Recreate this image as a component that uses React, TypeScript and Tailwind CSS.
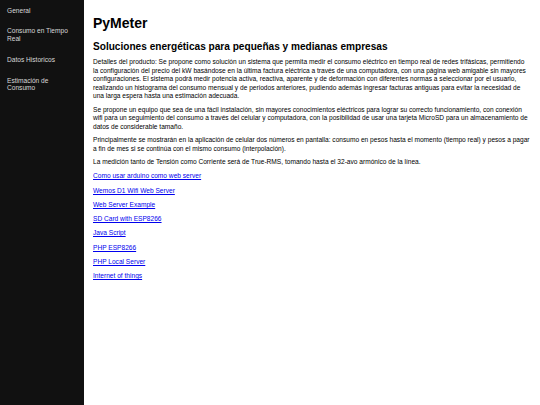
import React from "react";

const navItems = ["General", "Consumo en Tiempo Real", "Datos Historicos", "Estimación de Consumo"];

const links = [
  "Como usar arduino como web server",
  "Wemos D1 Wifi Web Server",
  "Web Server Example",
  "SD Card with ESP8266",
  "Java Script",
  "PHP ESP8266",
  "PHP Local Server",
  "Internet of things",
];

export default function App() {
  return (
    <div
      className="flex min-h-[405px] w-[540px] bg-white text-black"
      style={{ fontFamily: '"Liberation Sans", Arial, sans-serif' }}
    >
      <nav className="flex w-[84px] shrink-0 flex-col bg-[#111111]">
        {navItems.map((item) => (
          <a key={item} className="block px-[7px] py-[6.5px] text-[6.6px] leading-[7.8px] text-[#d8d8d8]">
            {item}
          </a>
        ))}
      </nav>

      <main className="flex-1 pl-[9px] pr-[10px] pt-[15px]">
        <h1 className="text-[14px] font-bold leading-[16px]">PyMeter</h1>
        <h2 className="mt-[10px] text-[10.1px] font-bold leading-[12px]">
          Soluciones energéticas para pequeñas y medianas empresas
        </h2>

        <div className="mt-[5px] flex flex-col gap-[5px] text-[6.6px] leading-[8.5px]">
          <p>
            Detalles del producto: Se propone como solución un sistema que permita medir el consumo eléctrico en
            tiempo real de redes trifásicas, permitiendo la configuración del precio del kW basándose en la última
            factura eléctrica a través de una computadora, con una página web amigable sin mayores configuraciones.
            El sistema podrá medir potencia activa, reactiva, aparente y de deformación con diferentes normas a
            seleccionar por el usuario, realizando un histograma del consumo mensual y de periodos anteriores,
            pudiendo además ingresar facturas antiguas para evitar la necesidad de una larga espera hasta una
            estimación adecuada.
          </p>
          <p>
            Se propone un equipo que sea de una fácil instalación, sin mayores conocimientos eléctricos para lograr
            su correcto funcionamiento, con conexión wifi para un seguimiento del consumo a través del celular y
            computadora, con la posibilidad de usar una tarjeta MicroSD para un almacenamiento de datos de
            considerable tamaño.
          </p>
          <p>
            Principalmente se mostrarán en la aplicación de celular dos números en pantalla: consumo en pesos hasta
            el momento (tiempo real) y pesos a pagar a fin de mes si se continúa con el mismo consumo (interpolación).
          </p>
          <p>
            La medición tanto de Tensión como Corriente será de True-RMS, tomando hasta el 32-avo armónico de la
            línea.
          </p>
          {links.map((l) => (
            <p key={l} className="mt-[0.8px]">
              <a href="#" className="text-[#0000ee] underline">
                {l}
              </a>
            </p>
          ))}
        </div>
      </main>
    </div>
  );
}
